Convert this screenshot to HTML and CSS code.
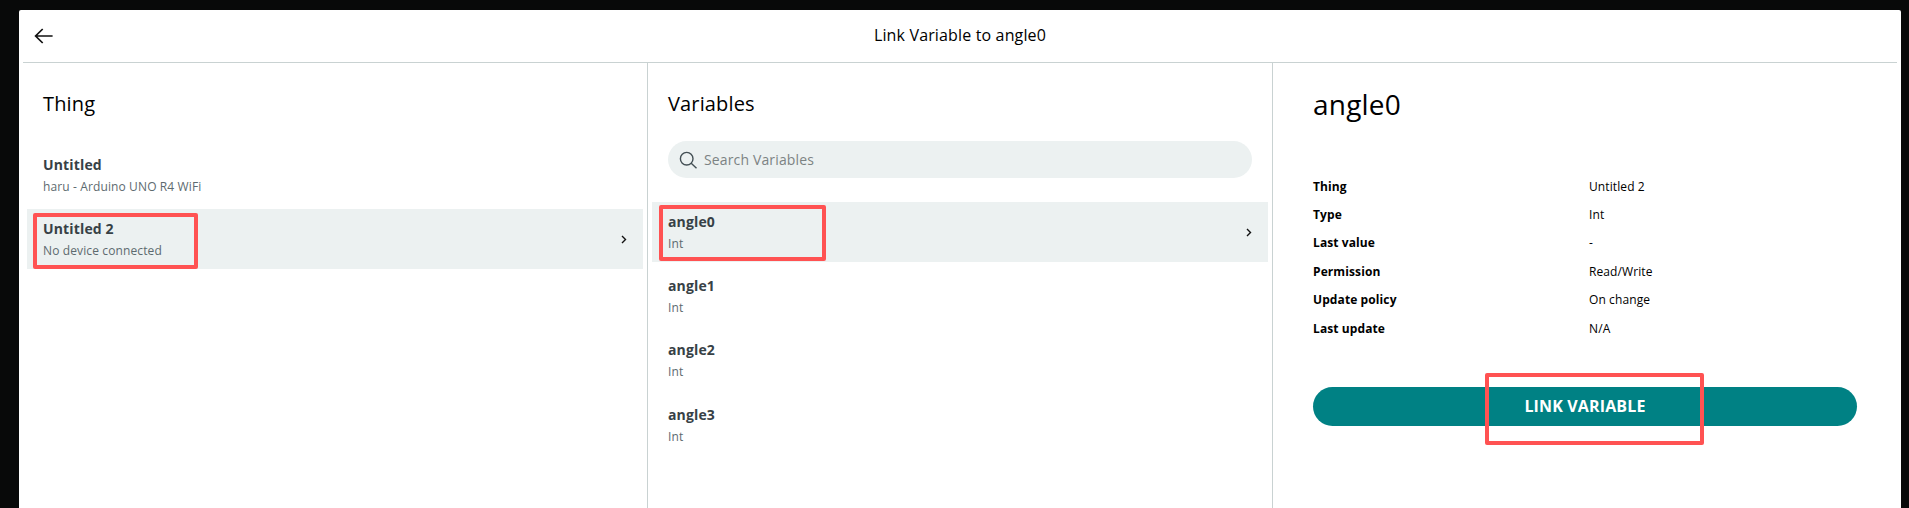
FILE: index.html
```html
<!DOCTYPE html>
<html lang="en">
<head>
<meta charset="utf-8">
<title>Link Variable to angle0</title>
<link rel="stylesheet" href="styles.css">
</head>
<body>
<main class="modal">
  <header class="modal-header">
    <svg class="back" width="20" height="18" viewBox="0 0 20 18"><path d="M8.7 2 1.6 9l7.1 7M1.6 9H18.6" fill="none" stroke="#111" stroke-width="1.7"/></svg>
    <h1 class="modal-title">Link Variable to angle0</h1>
  </header>
  <div class="columns">
    <section class="column things">
      <h2 class="column-title">Thing</h2>
      <ul class="list">
        <li class="item"><div><div class="name">Untitled</div><div class="sub">haru - Arduino UNO R4 WiFi</div></div></li>
        <li class="item selected"><div><div class="name">Untitled 2</div><div class="sub">No device connected</div></div>
          <svg class="chevron" width="6" height="9" viewBox="0 0 6 9"><path d="M1 1l3.5 3.5L1 8" fill="none" stroke="#111" stroke-width="1.4"/></svg>
          <span class="mark mark-thing"></span></li>
      </ul>
    </section>
    <section class="column variables">
      <h2 class="column-title">Variables</h2>
      <label class="search">
        <svg width="18" height="18" viewBox="0 0 18 18"><g fill="none" stroke="#434f54" stroke-width="1.4"><circle cx="7.7" cy="7.7" r="6.3"/><path d="M12.2 12.2l5.3 5"/></g></svg>
        <input class="search-input" type="text" placeholder="Search Variables">
      </label>
      <ul class="list">
        <li class="item selected"><div><div class="name">angle0</div><div class="sub">Int</div></div>
          <svg class="chevron" width="6" height="9" viewBox="0 0 6 9"><path d="M1 1l3.5 3.5L1 8" fill="none" stroke="#111" stroke-width="1.4"/></svg>
          <span class="mark mark-variable"></span></li>
        <li class="item"><div><div class="name">angle1</div><div class="sub">Int</div></div></li>
        <li class="item"><div><div class="name">angle2</div><div class="sub">Int</div></div></li>
        <li class="item"><div><div class="name">angle3</div><div class="sub">Int</div></div></li>
      </ul>
    </section>
    <section class="detail">
      <h2 class="detail-title">angle0</h2>
      <dl class="props">
        <dt>Thing</dt><dd>Untitled 2</dd>
        <dt>Type</dt><dd>Int</dd>
        <dt>Last value</dt><dd>-</dd>
        <dt>Permission</dt><dd>Read/Write</dd>
        <dt>Update policy</dt><dd>On change</dd>
        <dt>Last update</dt><dd>N/A</dd>
      </dl>
      <button class="link-button">LINK VARIABLE<span class="mark mark-button"></span></button>
    </section>
  </div>
</main>
</body>
</html>
```
FILE: styles.css
```css
* { box-sizing: border-box; }
html, body { height: 100%; }
body {
  margin: 0;
  padding: 10px 8px 0 19px;
  overflow: hidden;
  background: #080909;
  font-family: "Open Sans", "Noto Sans", sans-serif;
  color: #000;
}
h1, h2, ul, dl, dd { margin: 0; padding: 0; font-weight: 400; }
.modal {
  display: flex;
  flex-direction: column;
  height: 100%;
  padding: 0 4px;
  background: #fff;
  border-radius: 2px 2px 0 0;
}
.modal-header {
  display: flex;
  align-items: center;
  height: 53px;
  padding: 0 11px;
  border-bottom: 1px solid #c9d2d2;
}
.modal-title {
  flex: 1;
  margin: -2px 20px 0 0;
  text-align: center;
  font-size: 16px;
  letter-spacing: 0.15px;
}
.columns { flex: 1; display: grid; grid-template-columns: 625px 625px 1fr; }
.column { padding: 24px 4px 0; border-right: 1px solid #c9d2d2; }
.column-title { padding-left: 16px; font-size: 20px; line-height: 34px; letter-spacing: 0.15px; }
.things .list { margin-top: 24px; }
.list { display: grid; gap: 4px; list-style: none; }
.item {
  position: relative;
  display: flex;
  align-items: center;
  justify-content: space-between;
  height: 60.2px;
  padding: 0 16px;
}
.selected { background: #ecf1f1; }
.name { font-size: 14px; font-weight: 700; line-height: 24px; color: #374146; letter-spacing: 0.15px; }
.sub { font-size: 12px; line-height: 20px; color: #5d6a6f; letter-spacing: 0.12px; }
.search {
  display: flex;
  align-items: center;
  gap: 7px;
  height: 37px;
  margin: 20px 16px 24px;
  padding-left: 11px;
  border-radius: 19px;
  background: #ecf1f1;
}
.search-input {
  flex: 1;
  padding: 0;
  border: 0;
  background: transparent;
  font: 14px "Open Sans", sans-serif;
  letter-spacing: 0.14px;
}
.search-input::placeholder { color: #7c8383; }
.detail { padding: 20px 40px 0; }
.detail-title { font-size: 28px; line-height: 42px; letter-spacing: 0.2px; }
.props {
  display: grid;
  grid-template-columns: 276px 1fr;
  grid-auto-rows: 28.4px;
  margin-top: 47.6px;
  font-size: 12px;
  line-height: 28px;
  letter-spacing: 0.1px;
}
.props dt { font-weight: 700; }
.link-button {
  position: relative;
  display: block;
  width: 544px;
  height: 39px;
  margin-top: 44.4px;
  padding: 0 0 2px;
  border: 0;
  border-radius: 20px;
  background: #008184;
  color: #fff;
  font: 700 16px "Open Sans", sans-serif;
  letter-spacing: 0.15px;
}
.mark { position: absolute; border: 4px solid #ff5252; border-radius: 2px; }
.mark-thing { left: 6px; top: 4px; width: 165px; height: 56px; }
.mark-variable { left: 7px; top: 3px; width: 167px; height: 56px; }
.mark-button { left: 172px; top: -14px; width: 219px; height: 72px; }
```
